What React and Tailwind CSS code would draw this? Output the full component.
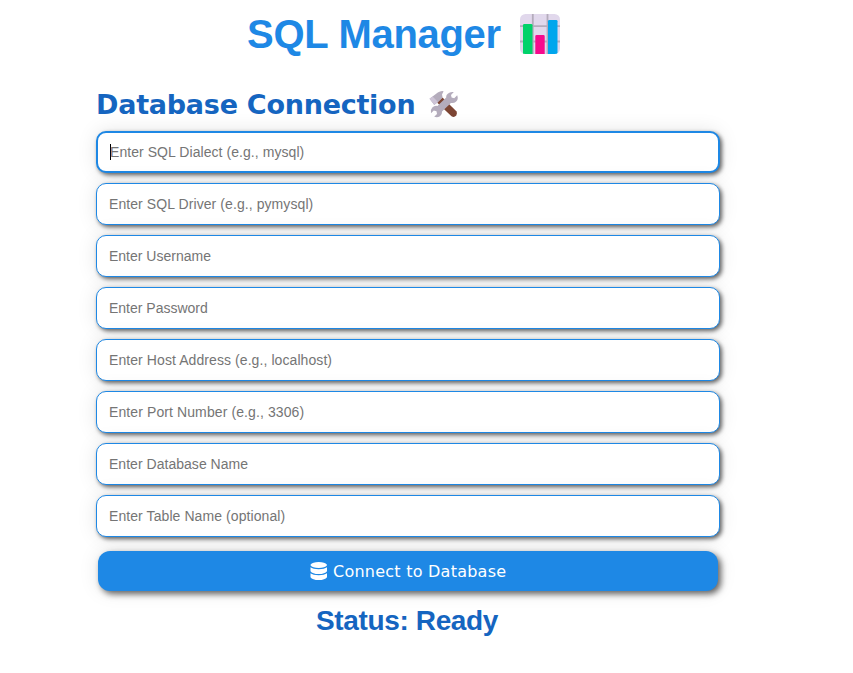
import React from "react";

const fields = [
  { label: "Enter SQL Driver (e.g., pymysql)", tracking: "tracking-[0.08px]" },
  { label: "Enter Username", tracking: "tracking-normal" },
  { label: "Enter Password", tracking: "tracking-normal" },
  { label: "Enter Host Address (e.g., localhost)", tracking: "tracking-[0.08px]" },
  { label: "Enter Port Number (e.g., 3306)", tracking: "tracking-[0.1px]" },
  { label: "Enter Database Name", tracking: "tracking-[0.03px]" },
  { label: "Enter Table Name (optional)", tracking: "tracking-[0.08px]" },
];

const fieldBase =
  "flex h-[42px] w-full items-center rounded-[10px] border-[#1e88e5] bg-white text-[14px] text-[#757575] shadow-[2px_2px_4px_rgba(0,0,0,0.6),0_0_20px_rgba(0,0,0,0.1)] font-['Liberation_Sans',Arial,sans-serif]";

function ChartIcon() {
  return (
    <svg className="h-10 w-10" viewBox="0 0 40 40">
      <clipPath id="chart">
        <rect width="40" height="40" rx="5.5" />
      </clipPath>
      <g clipPath="url(#chart)">
        <rect width="40" height="40" fill="#e1d8ec" />
        <path d="M12.8 0V40M27.5 0V40M0 12.2H40M0 27.5H40" stroke="#b4acbc" strokeWidth="1.8" />
        <path d="M3 40V11.3a1.3 1.3 0 0 1 1.3-1.3h6.9a1.3 1.3 0 0 1 1.3 1.3V40z" fill="#00d26a" />
        <path d="M15.3 40V22.3a1.3 1.3 0 0 1 1.3-1.3h6.8a1.3 1.3 0 0 1 1.3 1.3V40z" fill="#f70a8d" />
        <path d="M28 40V7.3A1.3 1.3 0 0 1 29.3 6h6.9a1.3 1.3 0 0 1 1.3 1.3V40z" fill="#00a6ed" />
      </g>
    </svg>
  );
}

function ToolsIcon() {
  return (
    <svg className="h-7 w-[30px]" viewBox="0 0 30 28">
      <path d="M8 12.5 13.5 7.5 27.3 21.3Q29 23.5 27.3 25.5Q25 28 22.5 26.2Z" fill="#7d4533" />
      <path d="M.6 8.8 8.8 2.6Q12 .3 14.6 1.2L13 4.5 13.6 7.5 8.6 12.4 5.2 15Z" fill="#b4acbc" />
      <path d="M.4 8.8 3.6 6.4 9 11.9 5.3 14.8Z" fill="#cdc4d6" />
      <path d="M20.3 2.8Q22.5 1.5 24.8 2.1L22 5 22.6 7.6 25.2 8.2 28.2 5.2Q29.8 9.2 26.9 11.8Q24.8 13.6 21.9 12.9L13 21.5Q13.4 24.4 11 26.3Q8.3 28 5.2 26.8L8 23.9 7.5 21.2 4.8 20.6 2 23.3Q1 20 3.3 17.5Q5.4 15.4 8.4 16L17.2 7.5Q16.9 4.5 20.3 2.8Z" fill="#b4acbc" />
    </svg>
  );
}

function DatabaseIcon() {
  return (
    <svg className="h-[18px] w-[17px] shrink-0" viewBox="0 0 17 18" fill="white">
      <path d="M.5 2.7Q2.5 0 8.7 0T17 2.7V3.3Q15 6 8.7 6T.5 3.3Z" />
      <path d="M.5 5.3Q3 7.2 8.7 7.2T17 5.3V9.2Q15 12 8.7 12T.5 9.2Z" />
      <path d="M.5 11.3Q3 13.2 8.7 13.2T17 11.3V15.2Q15 18 8.7 18T.5 15.2Z" />
    </svg>
  );
}

export default function App() {
  return (
    <div className="h-[673px] w-full overflow-hidden bg-white">
      <main className="ml-24 flex w-[624px] flex-col">
        <h1 className="mt-[10px] flex h-12 items-center pl-[151px] font-['Liberation_Sans',Arial,sans-serif] text-[40px] font-bold leading-[48px] text-[#1e88e5]">
          <span className="w-[273px] whitespace-nowrap tracking-[-0.3px]">SQL Manager</span>
          <ChartIcon />
        </h1>
        <h2 className="mt-[28px] flex h-[36px] items-center font-['DejaVu_Sans',Verdana,sans-serif] text-[27px] font-bold leading-[36px] text-[#1565c0]">
          <span className="w-[333px] whitespace-nowrap pt-0.5 tracking-[-0.25px]">Database Connection</span>
          <ToolsIcon />
        </h2>
        <div className="mt-[9px] flex flex-col gap-[10px]">
          <div className={fieldBase + " border-2 pl-3"}>
            <span className="h-4 w-px bg-black" />
            <span className="-ml-px tracking-[0.06px]">Enter SQL Dialect (e.g., mysql)</span>
          </div>
          {fields.map(({ label, tracking }) => (
            <div key={label} className={fieldBase + " border pl-3 " + tracking}>
              {label}
            </div>
          ))}
        </div>
        <button className="mx-[2px] mt-[14px] flex h-10 items-center justify-center gap-[6px] rounded-xl bg-[#1e88e5] font-['DejaVu_Sans',Verdana,sans-serif] text-[16px] text-white shadow-[3px_3px_6px_rgba(0,0,0,0.6),0_0_20px_rgba(0,0,0,0.1)]">
          <DatabaseIcon />
          <span className="w-[173px] whitespace-nowrap pt-0.5 text-left tracking-[0.24px]">Connect to Database</span>
        </button>
        <p className="mt-[14px] h-8 pl-[220px] font-['Liberation_Sans',Arial,sans-serif] text-[28px] font-bold leading-8 tracking-[-0.36px] text-[#1565c0]">
          Status: Ready
        </p>
      </main>
    </div>
  );
}
